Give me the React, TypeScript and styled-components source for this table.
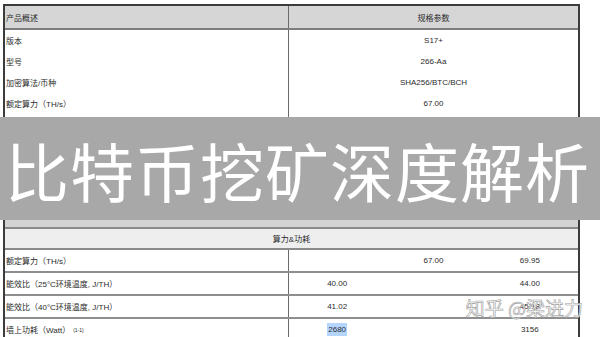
import React from "react"
import styled, { createGlobalStyle } from "styled-components"

const GlobalStyle = createGlobalStyle`
    html, body {
        margin: 0;
        padding: 0;
        background: #fff;
    }
`

const Page = styled.div`
    position: relative;
    width: 600px;
    height: 337px;
    overflow: hidden;
    background: #fff;
    font-family: "Liberation Sans", "Noto Sans CJK SC", sans-serif;
    color: #2b2b2b;
`

const TopTable = styled.div`
    margin: 4px 0 0 3px;
    width: 577px;
    height: 113px;
    box-sizing: border-box;
    border: 2px solid #3c3c3c;
    border-bottom: none;
    overflow: hidden;
`

const HeadRow = styled.div`
    display: grid;
    grid-template-columns: 284px 1fr;
    height: 22px;
    background: #d6d6d6;
    border-bottom: 2px solid #7e7e7e;
`

const Row = styled.div`
    display: grid;
    grid-template-columns: 284px 1fr;
    height: 21px;
`

const Cell = styled.div<{ $center?: boolean }>`
    display: flex;
    align-items: center;
    justify-content: ${p => (p.$center ? "center" : "flex-start")};
    padding-left: ${p => (p.$center ? "0" : "1px")};
    font-size: 8px;
    white-space: nowrap;
`

const LabelCell = styled(Cell)`
    border-right: 1px solid #6a6a6a;
`

const Band = styled.div`
    height: 103px;
    background: #a8a8a8;
    color: #fff;
    display: flex;
    align-items: center;
    padding-left: 5px;
    font-family: "Noto Sans CJK SC", sans-serif;
    font-size: 64px;
    letter-spacing: 1px;
    white-space: nowrap;
    overflow: hidden;
`

const BottomTable = styled.div`
    margin-left: 3px;
    width: 577px;
    height: 117px;
    box-sizing: border-box;
    border-left: 2px solid #3c3c3c;
    border-right: 2px solid #3c3c3c;
    overflow: hidden;
`

const Strip = styled.div`
    height: 7px;
    background: #d3d3d3;
    border-bottom: 2px solid #8a8a8a;
`

const SectionHead = styled.div`
    height: 19px;
    background: #eeeeee;
    border-bottom: 2px solid #8a8a8a;
    display: flex;
    align-items: center;
    justify-content: center;
    font-size: 8px;
`

const DataRow = styled.div`
    display: grid;
    grid-template-columns: 284px repeat(3, 1fr);
    height: 21px;
    border-bottom: 2px solid #8e8e8e;
`

const Sup = styled.sup`
    font-size: 5px;
    margin-left: 3px;
`

const Selected = styled.span`
    background: #b4d5fe;
    padding: 2px 1px;
`

const Watermark = styled.div`
    position: absolute;
    top: 294px;
    right: 17px;
    font-family: "Noto Sans CJK SC", sans-serif;
    font-size: 19px;
    color: rgba(255, 255, 255, 0.88);
    -webkit-text-stroke: 0.6px #9c9c9c;
    white-space: nowrap;
`

const specs = [
    ["版本", "S17+"],
    ["型号", "266-Aa"],
    ["加密算法/币种", "SHA256/BTC/BCH"],
    ["额定算力（TH/s）", "67.00"],
    ["", ""],
]

const App = () => {
    return (
        <Page>
            <GlobalStyle />
            <TopTable>
                <HeadRow>
                    <LabelCell>产品概述</LabelCell>
                    <Cell $center>规格参数</Cell>
                </HeadRow>
                {specs.map(([k, v], i) => (
                    <Row key={i}>
                        <LabelCell>{k}</LabelCell>
                        <Cell $center>{v}</Cell>
                    </Row>
                ))}
            </TopTable>
            <Band>比特币挖矿深度解析</Band>
            <BottomTable>
                <Strip />
                <SectionHead>算力&amp;功耗</SectionHead>
                <DataRow>
                    <LabelCell>额定算力（TH/s）</LabelCell>
                    <Cell $center />
                    <Cell $center>67.00</Cell>
                    <Cell $center>69.95</Cell>
                </DataRow>
                <DataRow>
                    <LabelCell>能效比（25°C环境温度, J/TH）</LabelCell>
                    <Cell $center>40.00</Cell>
                    <Cell $center />
                    <Cell $center>44.00</Cell>
                </DataRow>
                <DataRow>
                    <LabelCell>能效比（40°C环境温度, J/TH）</LabelCell>
                    <Cell $center>41.02</Cell>
                    <Cell $center />
                    <Cell $center>45.18</Cell>
                </DataRow>
                <DataRow>
                    <LabelCell>
                        墙上功耗（Watt）<Sup>(1-1)</Sup>
                    </LabelCell>
                    <Cell $center>
                        <Selected>2680</Selected>
                    </Cell>
                    <Cell $center />
                    <Cell $center>3156</Cell>
                </DataRow>
            </BottomTable>
            <Watermark>知乎 @梁进力</Watermark>
        </Page>
    )
}

export default App
